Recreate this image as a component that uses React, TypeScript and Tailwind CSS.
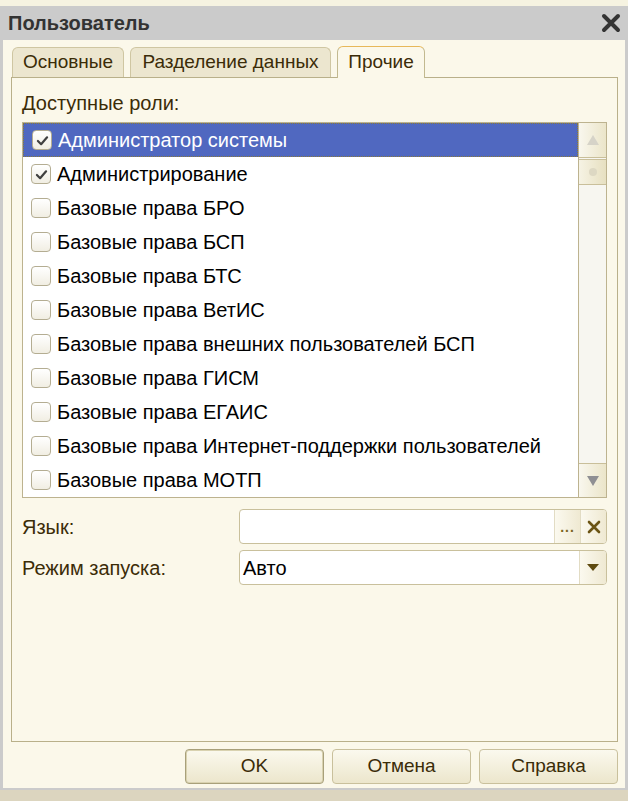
import { ReactNode } from 'react';

const roles = [
  { name: 'Администратор системы', checked: true },
  { name: 'Администрирование', checked: true },
  { name: 'Базовые права БРО', checked: false },
  { name: 'Базовые права БСП', checked: false },
  { name: 'Базовые права БТС', checked: false },
  { name: 'Базовые права ВетИС', checked: false },
  { name: 'Базовые права внешних пользователей БСП', checked: false },
  { name: 'Базовые права ГИСМ', checked: false },
  { name: 'Базовые права ЕГАИС', checked: false },
  { name: 'Базовые права Интернет-поддержки пользователей', checked: false },
  { name: 'Базовые права МОТП', checked: false },
];

function CheckBox({ checked }: { checked: boolean }) {
  return (
    <span className="flex h-[20px] w-[20px] shrink-0 items-center justify-center rounded-[4px] border border-[#b4ad92] bg-gradient-to-b from-[#ffffff] to-[#f1eee3]">
      {checked && (
        <svg width="13" height="11" viewBox="0 0 14 12">
          <path d="M2 6.5 L5.5 10 L12 2.5" fill="none" stroke="#404040" strokeWidth="2.4" strokeLinecap="round" strokeLinejoin="round" />
        </svg>
      )}
    </span>
  );
}

function Tab({ children, active, width }: { children: ReactNode; active?: boolean; width: string }) {
  if (active) {
    return (
      <div
        className={`relative -mb-px flex h-[32px] ${width} items-center justify-center rounded-t-[6px] border border-b-0 border-[#c2b98f] border-t-[#e7b85a] bg-[#fbf8ea] text-[19px] text-[#3b2c08]`}
      >
        {children}
      </div>
    );
  }
  return (
    <div
      className={`flex h-[30px] ${width} items-center justify-center rounded-t-[6px] border border-b-0 border-[#cfc6a2] bg-[#ece6cf] text-[19px] text-[#3b2c08]`}
    >
      {children}
    </div>
  );
}

function DlgButton({ children, primary }: { children: ReactNode; primary?: boolean }) {
  return (
    <button
      type="button"
      className={`flex h-[35px] w-[139px] items-center justify-center rounded-[4px] border bg-gradient-to-b from-[#fbf9ee] to-[#ece6cc] text-[19px] text-[#3b2c08] ${
        primary ? 'border-[#a8a07a] shadow-[inset_0_0_0_1px_#d9d2b0]' : 'border-[#c9c09c]'
      }`}
    >
      {children}
    </button>
  );
}

export default function App() {
  return (
    <div className="relative h-[801px] w-[628px] overflow-hidden bg-[#dcd5bf] font-['Liberation_Sans',Arial,sans-serif]">
      <div className="h-[6px] bg-[#f6f3e1]" />
      <div className="flex h-[784px] flex-col border-x-[3px] border-b-[2px] border-[#cbcbcb] bg-[#fbf8ea]">
        {/* title bar */}
        <div className="flex h-[34px] shrink-0 items-center justify-between bg-[#cbcbcb] pl-[5px] pr-[4px]">
          <span className="text-[20px] font-bold text-[#333333]">Пользователь</span>
          <svg width="20" height="20" viewBox="0 0 20 20">
            <path d="M3 3 L17 17 M17 3 L3 17" stroke="#333333" strokeWidth="4" strokeLinecap="round" />
          </svg>
        </div>

        <div className="flex flex-1 flex-col px-[8px] pt-[6px]">
          {/* tabs */}
          <div className="flex items-end gap-[6px] pl-[1px]">
            <Tab width="w-[112px]">Основные</Tab>
            <Tab width="w-[201px]">Разделение данных</Tab>
            <Tab active width="w-[88px]">Прочие</Tab>
          </div>

          {/* panel */}
          <div className="flex h-[665px] w-[607px] flex-col border border-[#b9b08a] px-[10px]">
            <div className="mt-[14px] h-[22px] text-[20px] leading-[22px] text-[#3b2c08]">Доступные роли:</div>

            <div className="mt-[8px] flex h-[376px] border border-[#bdb38f] bg-white">
              <div className="flex-1">
                {roles.map((r, i) => (
                  <div
                    key={r.name}
                    className={`flex h-[34px] items-center gap-[6px] pl-[8px] text-[20px] ${
                      i === 0
                        ? 'border border-dotted border-[#8a7a3a] bg-[#5068c0] pl-[7px] text-white'
                        : 'text-black'
                    }`}
                  >
                    <CheckBox checked={r.checked} />
                    <span>{r.name}</span>
                  </div>
                ))}
              </div>
              {/* scrollbar */}
              <div className="flex w-[28px] flex-col border-l border-[#bdb38f] bg-[#f7f6f0]">
                <div className="flex h-[35px] items-center justify-center border-b border-[#c9bf9a] bg-gradient-to-r from-[#f9f7ee] to-[#ebe5c9]">
                  <svg width="14" height="12" viewBox="0 0 14 12">
                    <path d="M7 1 L13 11 L1 11 Z" fill="#d6d3c8" />
                  </svg>
                </div>
                <div className="mt-[1px] flex h-[26px] items-center justify-center border-y border-[#c9bf9a] bg-gradient-to-r from-[#f6f3e4] to-[#e7e0c1]">
                  <span className="h-[8px] w-[8px] rounded-full bg-[#ddd8c3]" />
                </div>
                <div className="flex-1" />
                <div className="flex h-[34px] items-center justify-center border-t border-[#c9bf9a] bg-gradient-to-r from-[#f9f7ee] to-[#ebe5c9]">
                  <svg width="14" height="12" viewBox="0 0 14 12">
                    <path d="M1 1 L13 1 L7 11 Z" fill="#8f8f93" />
                  </svg>
                </div>
              </div>
            </div>

            {/* language */}
            <div className="mt-[11px] flex h-[35px] items-center">
              <span className="w-[217px] text-[20px] text-[#3b2c08]">Язык:</span>
              <div className="flex h-[35px] flex-1 overflow-hidden rounded-[4px] border border-[#c9c09c] bg-white">
                <div className="flex-1" />
                <div className="flex w-[26px] items-end justify-center border-l border-[#e2dcc4] bg-gradient-to-r from-[#fbf9ef] to-[#efe9d2] pb-[9px]">
                  <span className="text-[14px] font-bold leading-none tracking-[1px] text-[#7a6420]">...</span>
                </div>
                <div className="flex w-[26px] items-center justify-center border-l border-[#e2dcc4] bg-gradient-to-r from-[#fbf9ef] to-[#efe9d2]">
                  <svg width="14" height="14" viewBox="0 0 14 14">
                    <path d="M2 2 L12 12 M12 2 L2 12" stroke="#6b5414" strokeWidth="2.6" strokeLinecap="round" />
                  </svg>
                </div>
              </div>
            </div>

            {/* launch mode */}
            <div className="mt-[6px] flex h-[35px] items-center">
              <span className="w-[217px] text-[20px] text-[#3b2c08]">Режим запуска:</span>
              <div className="flex h-[35px] flex-1 overflow-hidden rounded-[4px] border border-[#c9c09c] bg-white">
                <div className="flex flex-1 items-center pl-[3px] text-[20px] text-black">Авто</div>
                <div className="flex w-[27px] items-center justify-center border-l border-[#e2dcc4] bg-gradient-to-r from-[#fbf9ef] to-[#efe9d2]">
                  <svg width="12" height="8" viewBox="0 0 12 8">
                    <path d="M0 0 L12 0 L6 7 Z" fill="#5e4a10" />
                  </svg>
                </div>
              </div>
            </div>
          </div>

          {/* buttons */}
          <div className="mt-[7px] flex w-[607px] justify-end gap-[8px]">
            <DlgButton primary>OK</DlgButton>
            <DlgButton>Отмена</DlgButton>
            <DlgButton>Справка</DlgButton>
          </div>
        </div>
      </div>
    </div>
  );
}
